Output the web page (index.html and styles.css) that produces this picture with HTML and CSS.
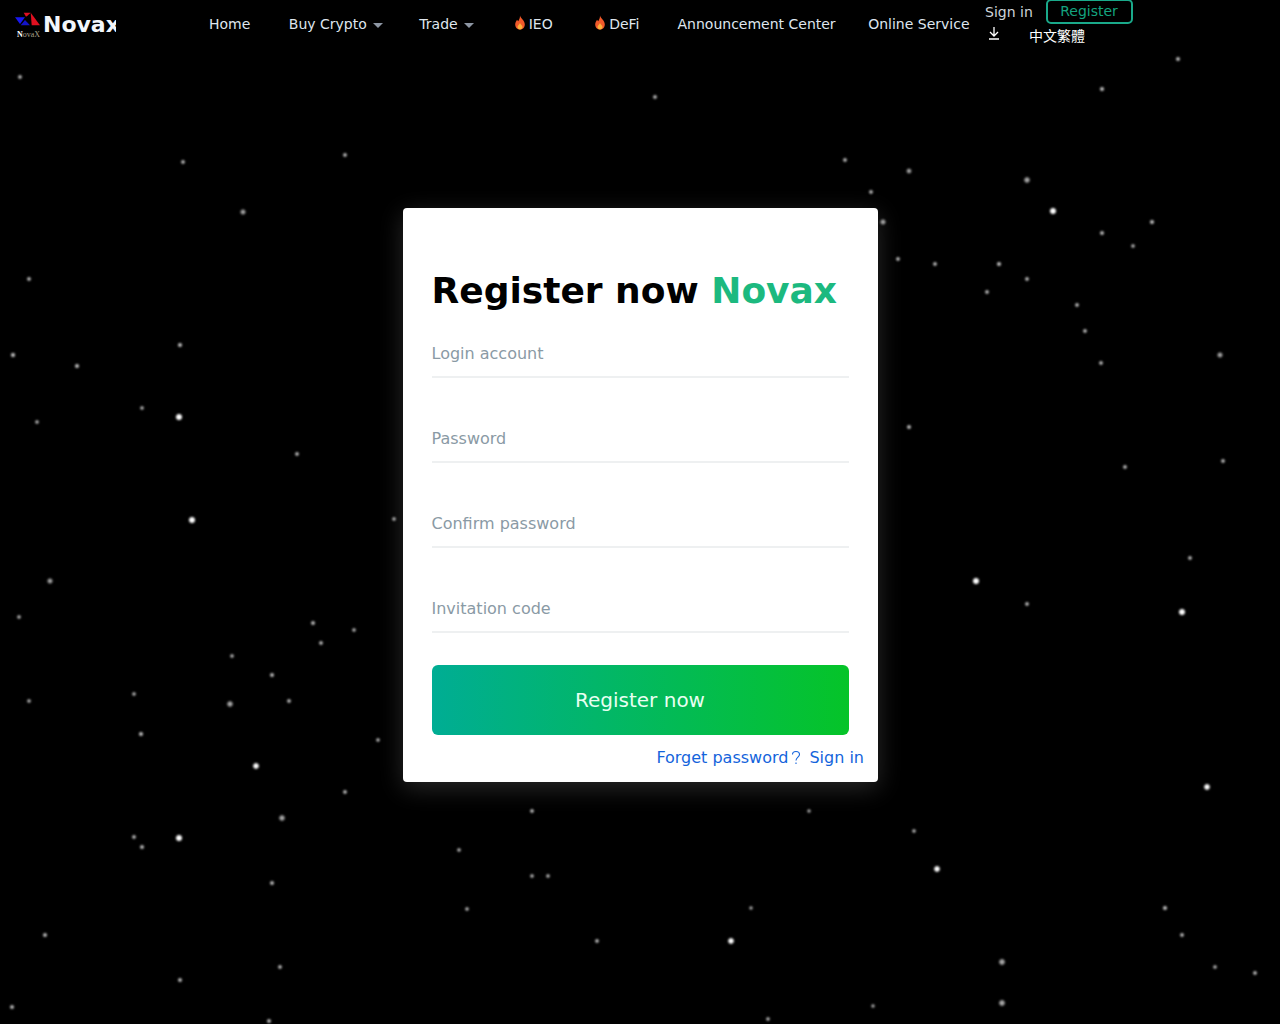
FILE: index.html
```html
<!DOCTYPE html>
<html lang="en">
<head>
<meta charset="utf-8">
<title>Register now Novax</title>
<link rel="stylesheet" href="styles.css">
</head>
<body>
<svg class="stars" width="1280" height="1024" viewBox="0 0 1280 1024" fill="#fff" stroke="#fff" stroke-width="1">
  <defs><filter id="soft" x="-200%" y="-200%" width="500%" height="500%"><feGaussianBlur stdDeviation="1.1"/></filter></defs>
  <g filter="url(#soft)">
    <circle cx="192" cy="520" r="2.6"/><circle cx="179" cy="417" r="2.6"/><circle cx="179" cy="838" r="2.6"/><circle cx="976" cy="581" r="2.6"/><circle cx="1182" cy="612" r="2.6"/><circle cx="1053" cy="211" r="2.6"/><circle cx="731" cy="941" r="2.4"/><circle cx="256" cy="766" r="2.4"/><circle cx="937" cy="869" r="2.4"/><circle cx="1207" cy="787" r="2.4"/>
    <g opacity=".65"><circle cx="1002" cy="962" r="2.4"/><circle cx="1002" cy="1003" r="2.4"/><circle cx="1027" cy="180" r="2.3"/><circle cx="243" cy="212" r="2.1"/><circle cx="50" cy="581" r="2.1"/><circle cx="230" cy="704" r="2.3"/><circle cx="282" cy="818" r="2.3"/><circle cx="1220" cy="355" r="2.1"/><circle cx="883" cy="222" r="2.1"/><circle cx="909" cy="171" r="1.9"/></g>
    <g opacity=".75">
      <circle cx="1178" cy="59" r="1.5"/><circle cx="1102" cy="89" r="1.6"/><circle cx="655" cy="97" r="1.4"/><circle cx="20" cy="77" r="1.4"/><circle cx="183" cy="162" r="1.4"/><circle cx="345" cy="155" r="1.4"/><circle cx="845" cy="160" r="1.4"/><circle cx="871" cy="192" r="1.4"/><circle cx="1152" cy="222" r="1.6"/><circle cx="1102" cy="233" r="1.5"/><circle cx="1133" cy="246" r="1.3"/><circle cx="898" cy="259" r="1.4"/><circle cx="935" cy="264" r="1.4"/><circle cx="999" cy="264" r="1.6"/><circle cx="1027" cy="279" r="1.4"/><circle cx="987" cy="292" r="1.4"/><circle cx="1077" cy="305" r="1.4"/><circle cx="1085" cy="331" r="1.4"/><circle cx="1101" cy="363" r="1.4"/><circle cx="29" cy="279" r="1.4"/><circle cx="13" cy="355" r="1.7"/><circle cx="180" cy="345" r="1.6"/><circle cx="77" cy="366" r="1.6"/><circle cx="142" cy="408" r="1.3"/><circle cx="37" cy="422" r="1.3"/><circle cx="297" cy="454" r="1.4"/><circle cx="909" cy="427" r="1.5"/><circle cx="1125" cy="467" r="1.4"/><circle cx="1223" cy="461" r="1.4"/><circle cx="394" cy="519" r="1.3"/><circle cx="1190" cy="558" r="1.4"/><circle cx="1027" cy="604" r="1.4"/><circle cx="19" cy="617" r="1.3"/><circle cx="313" cy="623" r="1.5"/><circle cx="321" cy="643" r="1.4"/><circle cx="354" cy="630" r="1.3"/><circle cx="232" cy="656" r="1.3"/><circle cx="272" cy="675" r="1.5"/><circle cx="134" cy="694" r="1.3"/><circle cx="29" cy="701" r="1.3"/><circle cx="289" cy="701" r="1.4"/><circle cx="141" cy="734" r="1.6"/><circle cx="378" cy="740" r="1.3"/><circle cx="345" cy="792" r="1.4"/><circle cx="532" cy="811" r="1.4"/><circle cx="809" cy="811" r="1.2"/><circle cx="914" cy="831" r="1.3"/><circle cx="134" cy="837" r="1.4"/><circle cx="142" cy="847" r="1.5"/><circle cx="459" cy="850" r="1.3"/><circle cx="532" cy="876" r="1.3"/><circle cx="548" cy="876" r="1.3"/><circle cx="272" cy="883" r="1.5"/><circle cx="467" cy="909" r="1.3"/><circle cx="1165" cy="908" r="1.6"/><circle cx="751" cy="908" r="1.2"/><circle cx="45" cy="935" r="1.5"/><circle cx="597" cy="941" r="1.4"/><circle cx="1182" cy="935" r="1.4"/><circle cx="280" cy="967" r="1.4"/><circle cx="1215" cy="967" r="1.3"/><circle cx="1255" cy="973" r="1.4"/><circle cx="180" cy="980" r="1.5"/><circle cx="12" cy="1007" r="1.5"/><circle cx="873" cy="1006" r="1.2"/><circle cx="269" cy="1021" r="1.5"/><circle cx="768" cy="1019" r="1.3"/>
    </g>
  </g>
</svg>

<header class="topbar">
  <a class="brand" href="#">
    <svg class="brand-mark" width="28" height="28" viewBox="0 0 28 28">
      <path d="M9.700 2.700H16.700L14 5.300L12 6.700Z" fill="#e01020"/>
      <path d="M16.700 2.700L26 15.300H17.700Z" fill="#e01020"/>
      <path d="M1 7.300H11L6 14Z" fill="#1818f0"/>
      <path d="M11 10L16 15.300H6.700Z" fill="#1414c8"/>
      <text x="3" y="27" class="brand-tiny"><tspan class="brand-tiny-n">N</tspan>ovaX</text>
    </svg>
    <span class="brand-name">Novax</span>
  </a>
  <nav class="menu">
    <a class="menu-item" href="#">Home</a>
    <a class="menu-item menu-buy" href="#">Buy Crypto<i class="caret"></i></a>
    <a class="menu-item menu-trade" href="#">Trade<i class="caret"></i></a>
    <a class="menu-item menu-hot" href="#"><svg class="flame" width="12" height="15" viewBox="0 0 12 15"><path d="M6 .5C6.500 3 10.800 5.500 10.800 9.500C10.800 12.500 8.500 14.500 6 14.500C3.500 14.500 1.200 12.500 1.200 9.500C1.200 7.500 2.500 6 3 4.800C3.600 5.600 4 6 4.300 6.300C5 4.500 6.200 3 6 .5Z" fill="#f1592a"/><path d="M6 8C6.500 9.500 8.500 10.500 8.500 12C8.500 13.500 7.300 14.500 6 14.500C4.700 14.500 3.500 13.500 3.500 12C3.500 10.500 5.500 9.500 6 8Z" fill="#fbb03b"/></svg>IEO</a>
    <a class="menu-item menu-hot menu-defi" href="#"><svg class="flame" width="12" height="15" viewBox="0 0 12 15"><path d="M6 .5C6.500 3 10.800 5.500 10.800 9.500C10.800 12.500 8.500 14.500 6 14.500C3.500 14.500 1.200 12.500 1.200 9.500C1.200 7.500 2.500 6 3 4.800C3.600 5.600 4 6 4.300 6.300C5 4.500 6.200 3 6 .5Z" fill="#f1592a"/><path d="M6 8C6.500 9.500 8.500 10.500 8.500 12C8.500 13.500 7.300 14.500 6 14.500C4.700 14.500 3.500 13.500 3.500 12C3.500 10.500 5.500 9.500 6 8Z" fill="#fbb03b"/></svg>DeFi</a>
    <a class="menu-item" href="#">Announcement Center</a>
    <a class="menu-item menu-service" href="#">Online Service</a>
  </nav>
  <div class="account">
    <div class="account-row">
      <a class="signin" href="#">Sign in</a>
      <a class="register-btn" href="#">Register</a>
    </div>
    <div class="account-row account-row-low">
      <svg class="download" width="14" height="14" viewBox="0 0 14 14" fill="none" stroke="#fff" stroke-width="1.300"><path d="M7 1V9.500M3 6L7 10L11 6M2 13H12"/></svg>
      <a class="lang" href="#">中文繁體</a>
    </div>
  </div>
</header>

<main class="stage">
  <form class="card">
    <h1 class="card-title">Register now <span class="card-title-accent">Novax</span></h1>
    <label class="field">Login account</label>
    <label class="field">Password</label>
    <label class="field">Confirm password</label>
    <label class="field">Invitation code</label>
    <button class="submit" type="button">Register now</button>
    <div class="card-links">
      <a href="#">Forget password</a><svg class="question" width="10" height="16" viewBox="0 0 10 16" fill="none" stroke="#1464dc" stroke-width="1.100"><path d="M1.500 4.500C1.500 2.500 3 1.500 5 1.500C7 1.500 8.500 2.700 8.500 4.500C8.500 7 5 7.200 5 10.500M5 12.500V14"/></svg><a href="#">Sign in</a>
    </div>
  </form>
</main>
</body>
</html>
```

FILE: styles.css
```css
html, body {
  margin: 0;
  padding: 0;
  height: 1024px;
  overflow: hidden;
  background: #000;
  font-family: "DejaVu Sans", "Noto Sans CJK TC", sans-serif;
}
a { text-decoration: none; color: inherit; }

.stars { position: absolute; left: 0; top: 0; }

.topbar {
  position: relative;
  display: flex;
  height: 48px;
  align-items: flex-start;
  color: #dfe6ee;
  font-size: 14px;
}
.brand {
  display: flex;
  align-items: center;
  width: 102px;
  height: 48px;
  margin-left: 14px;
  overflow: hidden;
}
.brand-mark { flex: none; }
.brand-tiny { font-family: "Liberation Serif", serif; font-size: 8px; fill: #a8a08c; }
.brand-tiny-n { font-weight: bold; fill: #fff; }
.brand-name {
  font-size: 22px;
  font-weight: bold;
  color: #f2f6fb;
  margin-left: 1px;
}
.menu {
  display: flex;
  align-items: center;
  height: 48px;
  margin-left: 93px;
  gap: 38px;
  white-space: nowrap;
}
.menu-buy { margin-left: .5px; }
.menu-trade { margin-left: -1.500px; margin-right: 2px; }
.menu-hot { display: flex; align-items: center; }
.menu-defi { margin-left: 3.500px; }
.menu-service { margin-left: -5.500px; }
.flame { margin-top: -4px; margin-right: 3px; }
.caret {
  display: inline-block;
  width: 0;
  height: 0;
  margin-left: 6px;
  border: 5px solid transparent;
  border-top: 5px solid #8d96a3;
  border-bottom: 0;
  vertical-align: middle;
}
.account { margin-left: 15.500px; width: 150px; }
.account-row { display: flex; align-items: center; }
.signin { color: #cfd4da; width: 60.500px; }
.register-btn {
  box-sizing: border-box;
  width: 87px;
  height: 25px;
  margin-top: -1px;
  border: 2px solid #1aa98a;
  border-radius: 5px;
  color: #14a37f;
  text-align: center;
  line-height: 21px;
}
.account-row-low { align-items: flex-start; margin-top: 1px; color: #fff; }
.download { margin-left: 2px; margin-top: 1px; }
.lang { margin-left: 28px; margin-top: 1px; font-size: 14px; line-height: 20px; }

.stage { display: flex; justify-content: center; padding-top: 160px; }
.card {
  position: relative;
  box-sizing: border-box;
  width: 475px;
  height: 574px;
  padding: 61px 29px 0;
  background: #fff;
  border-radius: 4px;
  box-shadow: 0 6px 24px rgba(255, 255, 255, .16);
}
.card-title {
  margin: 0 0 16px;
  font-size: 36px;
  line-height: 44px;
  font-weight: bold;
  color: #000;
  white-space: nowrap;
}
.card-title-accent { color: #1cb97f; }
.field {
  display: block;
  box-sizing: border-box;
  height: 49px;
  padding-top: 13px;
  color: #8a9aa5;
  font-size: 16px;
  line-height: 24px;
  position: relative;
}
.field + .field { margin-top: 36px; }
.field::after {
  content: "";
  position: absolute;
  left: 0;
  right: 0;
  bottom: 0;
  height: 2px;
  background: #eef0f1;
}
.submit {
  display: block;
  width: 100%;
  height: 70px;
  margin-top: 32px;
  border: 0;
  border-radius: 6px;
  background: linear-gradient(90deg, #00ad94, #05c428);
  color: #e8fff2;
  font-family: inherit;
  font-size: 20px;
}
.card-links {
  display: flex;
  align-items: center;
  justify-content: flex-end;
  margin-top: 13px;
  margin-right: -15.500px;
  color: #1464dc;
  font-size: 16px;
  line-height: 20px;
  white-space: nowrap;
}
.question { margin: 0 8px 0 3px; }
```
